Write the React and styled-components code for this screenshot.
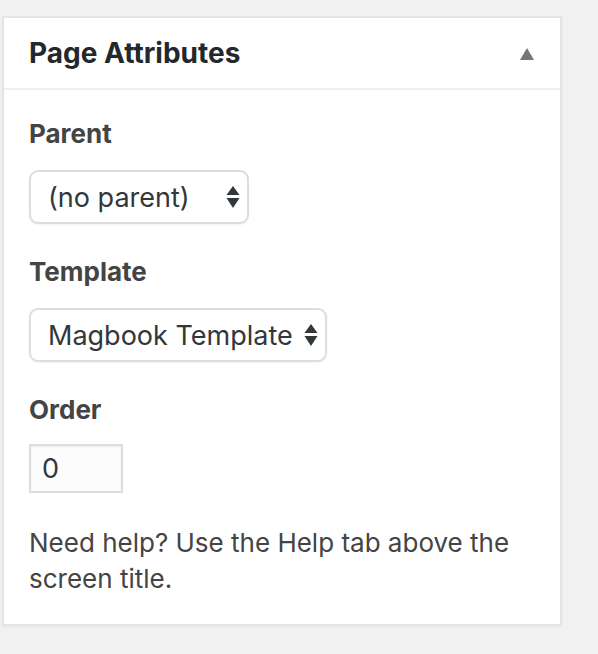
import React from "react";
import styled, { createGlobalStyle } from "styled-components";

const Global = createGlobalStyle`
  html, body { margin: 0; padding: 0; background: #f1f1f1; }
  body { font-family: Inter, Roboto, "Liberation Sans", Arial, sans-serif; }
  * { box-sizing: border-box; }
`;

const Page = styled.div`
  padding: 16px 0 0 2px;
  width: 598px;
  height: 654px;
`;

const Panel = styled.section`
  width: 560px;
  background: #fff;
  border: 2px solid #e5e5e5;
  box-shadow: 0 1px 2px rgba(0, 0, 0, 0.05);
`;

const Header = styled.div`
  height: 72px;
  display: flex;
  align-items: center;
  justify-content: space-between;
  padding: 0 26px 0 25px;
  border-bottom: 2px solid #eee;
`;

const Title = styled.h2`
  margin: 0;
  font-size: 28px;
  font-weight: 700;
  color: #23282d;
`;

const Toggle = styled.button`
  border: 0;
  background: none;
  padding: 0;
  width: 14px;
  height: 12px;
  margin-top: 2px;
  display: flex;
  align-items: center;
  justify-content: center;
`;

const Body = styled.div`
  padding: 0 25px 27px 25px;
`;

const Label = styled.div`
  margin: ${(p) => p.$top}px 0 0 0;
  font-size: 26px;
  line-height: 32px;
  font-weight: 700;
  color: #444;
`;

const SelectBox = styled.div`
  margin-top: 20px;
  width: ${(p) => p.$w}px;
  height: 54px;
  border: 2px solid #ddd;
  border-radius: 9px;
  background: #fff;
  box-shadow: 0 1px 2px rgba(0, 0, 0, 0.05);
  display: flex;
  align-items: center;
  justify-content: space-between;
  padding: 0 7px 0 17px;
  font-size: 27px;
  color: #32373c;
  white-space: nowrap;
`;

const NumberBox = styled.div`
  margin-top: 18px;
  width: 94px;
  height: 49px;
  border: 2px solid #ddd;
  background: #fcfcfc;
  box-shadow: inset 0 1px 2px rgba(0, 0, 0, 0.07);
  display: flex;
  align-items: center;
  padding-left: 11px;
  font-size: 27px;
  color: #32373c;
`;

const Help = styled.p`
  margin: 32px 0 0 0;
  max-width: 500px;
  font-size: 26px;
  line-height: 36px;
  color: #444;
`;

const Arrows = () => (
  <svg width="14" height="24" viewBox="0 0 14 24">
    <path d="M7 1 L13.5 10 L0.5 10 Z" fill="#32373c" />
    <path d="M0.5 13 L13.5 13 L7 23 Z" fill="#32373c" />
  </svg>
);

export default function App() {
  return (
    <>
      <Global />
      <Page>
        <Panel>
          <Header>
            <Title>Page Attributes</Title>
            <Toggle aria-label="Toggle panel">
              <svg width="14" height="12" viewBox="0 0 14 12">
                <path d="M7 0 L14 12 L0 12 Z" fill="#72777c" />
              </svg>
            </Toggle>
          </Header>
          <Body>
            <Label $top={28}>Parent</Label>
            <SelectBox $w={220}>
              <span>(no parent)</span>
              <Arrows />
            </SelectBox>
            <Label $top={32}>Template</Label>
            <SelectBox $w={298}>
              <span>Magbook Template</span>
              <Arrows />
            </SelectBox>
            <Label $top={32}>Order</Label>
            <NumberBox>0</NumberBox>
            <Help>Need help? Use the Help tab above the screen title.</Help>
          </Body>
        </Panel>
      </Page>
    </>
  );
}
